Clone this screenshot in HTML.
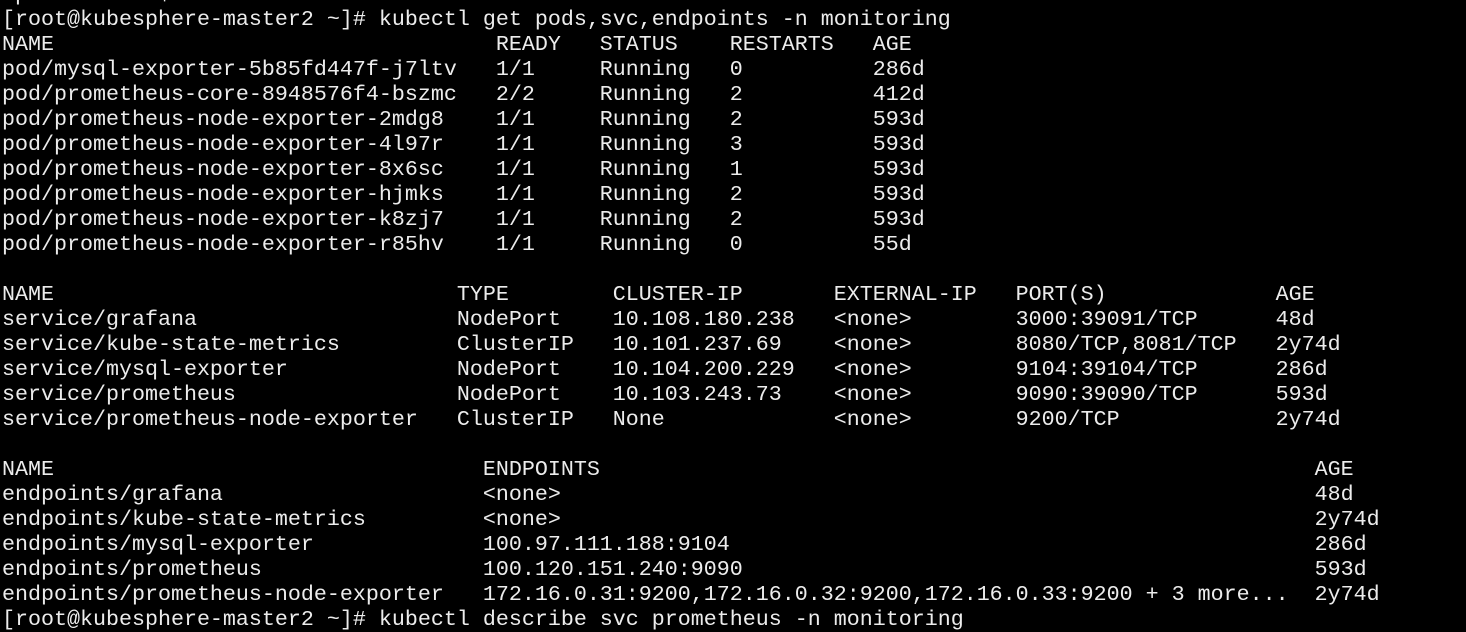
<!DOCTYPE html>
<html><head><meta charset="utf-8"><style>
html,body{margin:0;padding:0;background:#000;width:1466px;height:614px;overflow:hidden}
pre{margin:0;position:absolute;left:2px;top:-18px;font-family:"Liberation Mono","DejaVu Sans Mono",monospace;font-size:21.67px;line-height:25px;color:#ececec;white-space:pre}
</style></head><body><pre>/prometheus $ exit
[root@kubesphere-master2 ~]# kubectl get pods,svc,endpoints -n monitoring
NAME                                  READY   STATUS    RESTARTS   AGE
pod/mysql-exporter-5b85fd447f-j7ltv   1/1     Running   0          286d
pod/prometheus-core-8948576f4-bszmc   2/2     Running   2          412d
pod/prometheus-node-exporter-2mdg8    1/1     Running   2          593d
pod/prometheus-node-exporter-4l97r    1/1     Running   3          593d
pod/prometheus-node-exporter-8x6sc    1/1     Running   1          593d
pod/prometheus-node-exporter-hjmks    1/1     Running   2          593d
pod/prometheus-node-exporter-k8zj7    1/1     Running   2          593d
pod/prometheus-node-exporter-r85hv    1/1     Running   0          55d

NAME                               TYPE        CLUSTER-IP       EXTERNAL-IP   PORT(S)             AGE
service/grafana                    NodePort    10.108.180.238   &lt;none&gt;        3000:39091/TCP      48d
service/kube-state-metrics         ClusterIP   10.101.237.69    &lt;none&gt;        8080/TCP,8081/TCP   2y74d
service/mysql-exporter             NodePort    10.104.200.229   &lt;none&gt;        9104:39104/TCP      286d
service/prometheus                 NodePort    10.103.243.73    &lt;none&gt;        9090:39090/TCP      593d
service/prometheus-node-exporter   ClusterIP   None             &lt;none&gt;        9200/TCP            2y74d

NAME                                 ENDPOINTS                                                       AGE
endpoints/grafana                    &lt;none&gt;                                                          48d
endpoints/kube-state-metrics         &lt;none&gt;                                                          2y74d
endpoints/mysql-exporter             100.97.111.188:9104                                             286d
endpoints/prometheus                 100.120.151.240:9090                                            593d
endpoints/prometheus-node-exporter   172.16.0.31:9200,172.16.0.32:9200,172.16.0.33:9200 + 3 more...  2y74d
[root@kubesphere-master2 ~]# kubectl describe svc prometheus -n monitoring</pre></body></html>
